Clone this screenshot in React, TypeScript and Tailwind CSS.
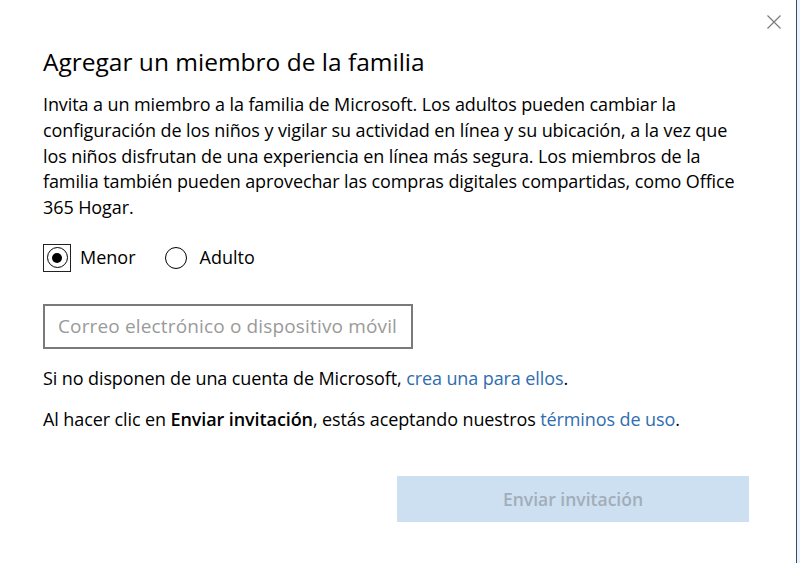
import React from "react";

export default function App() {
  const font = { fontFamily: '"Open Sans", "Noto Sans", sans-serif' };
  return (
    <div className="w-[800px] h-[563px] flex bg-white overflow-hidden" style={font}>
      <div className="relative w-[796px] h-full bg-white pl-[43px] pt-[46px] text-black">
        <button className="absolute right-[14px] top-[14px] w-[16px] h-[16px] flex items-center justify-center">
          <svg width="16" height="16" viewBox="0 0 16 16" fill="none" stroke="#7a7a7a" strokeWidth="1.2">
            <path d="M1.5 1.5 L14.5 14.5 M14.5 1.5 L1.5 14.5" />
          </svg>
        </button>
        <h1 className="text-[24.5px] leading-[32px] font-medium tracking-[0px]">Agregar un miembro de la familia</h1>
        <div className="mt-[14px] text-[18px] leading-[25.75px] tracking-[-0.1px] whitespace-nowrap">
          <div>Invita a un miembro a la familia de Microsoft. Los adultos pueden cambiar la</div>
          <div>configuración de los niños y vigilar su actividad en línea y su ubicación, a la vez que</div>
          <div>los niños disfrutan de una experiencia en línea más segura. Los miembros de la</div>
          <div>familia también pueden aprovechar las compras digitales compartidas, como Office</div>
          <div>365 Hogar.</div>
        </div>
        <div className="mt-[23px] flex items-center text-[18px] h-[28px]">
          <div className="w-[28px] h-[28px] border border-[#222] flex items-center justify-center">
            <div className="w-[21px] h-[21px] rounded-full border-[1.5px] border-black flex items-center justify-center">
              <div className="w-[10px] h-[10px] rounded-full bg-black" />
            </div>
          </div>
          <span className="ml-[9px]">Menor</span>
          <div className="ml-[29px] w-[22px] h-[22px] rounded-full border-[1.5px] border-black" />
          <span className="ml-[13px]">Adulto</span>
        </div>
        <div className="mt-[32px] w-[370px] h-[45px] border-2 border-[#7a7a7a] flex items-center pl-[13px]">
          <span className="text-[19px] tracking-[0.15px] text-[#9a9a9a]">Correo electrónico o dispositivo móvil</span>
        </div>
        <div className="mt-[17px] text-[18px] leading-[25px] tracking-[-0.1px]">
          Si no disponen de una cuenta de Microsoft, <span className="text-[#2f6db0]">crea una para ellos</span>.
        </div>
        <div className="mt-[16px] text-[18px] leading-[25px] tracking-[-0.1px]">
          Al hacer clic en <span className="font-semibold">Enviar invitación</span>, estás aceptando nuestros <span className="text-[#2f6db0]">términos de uso</span>.
        </div>
        <div className="mt-[44px] flex justify-end pr-[47px]">
          <div className="w-[352px] h-[46px] bg-[#cce0f2] flex items-center justify-center text-[17.5px] font-semibold text-[#a3adb8]">
            Enviar invitación
          </div>
        </div>
      </div>
      <div className="w-[1px] h-full bg-[#3c4a59]" />
      <div className="w-[3px] h-full bg-[#e8f2fb]" />
    </div>
  );
}
